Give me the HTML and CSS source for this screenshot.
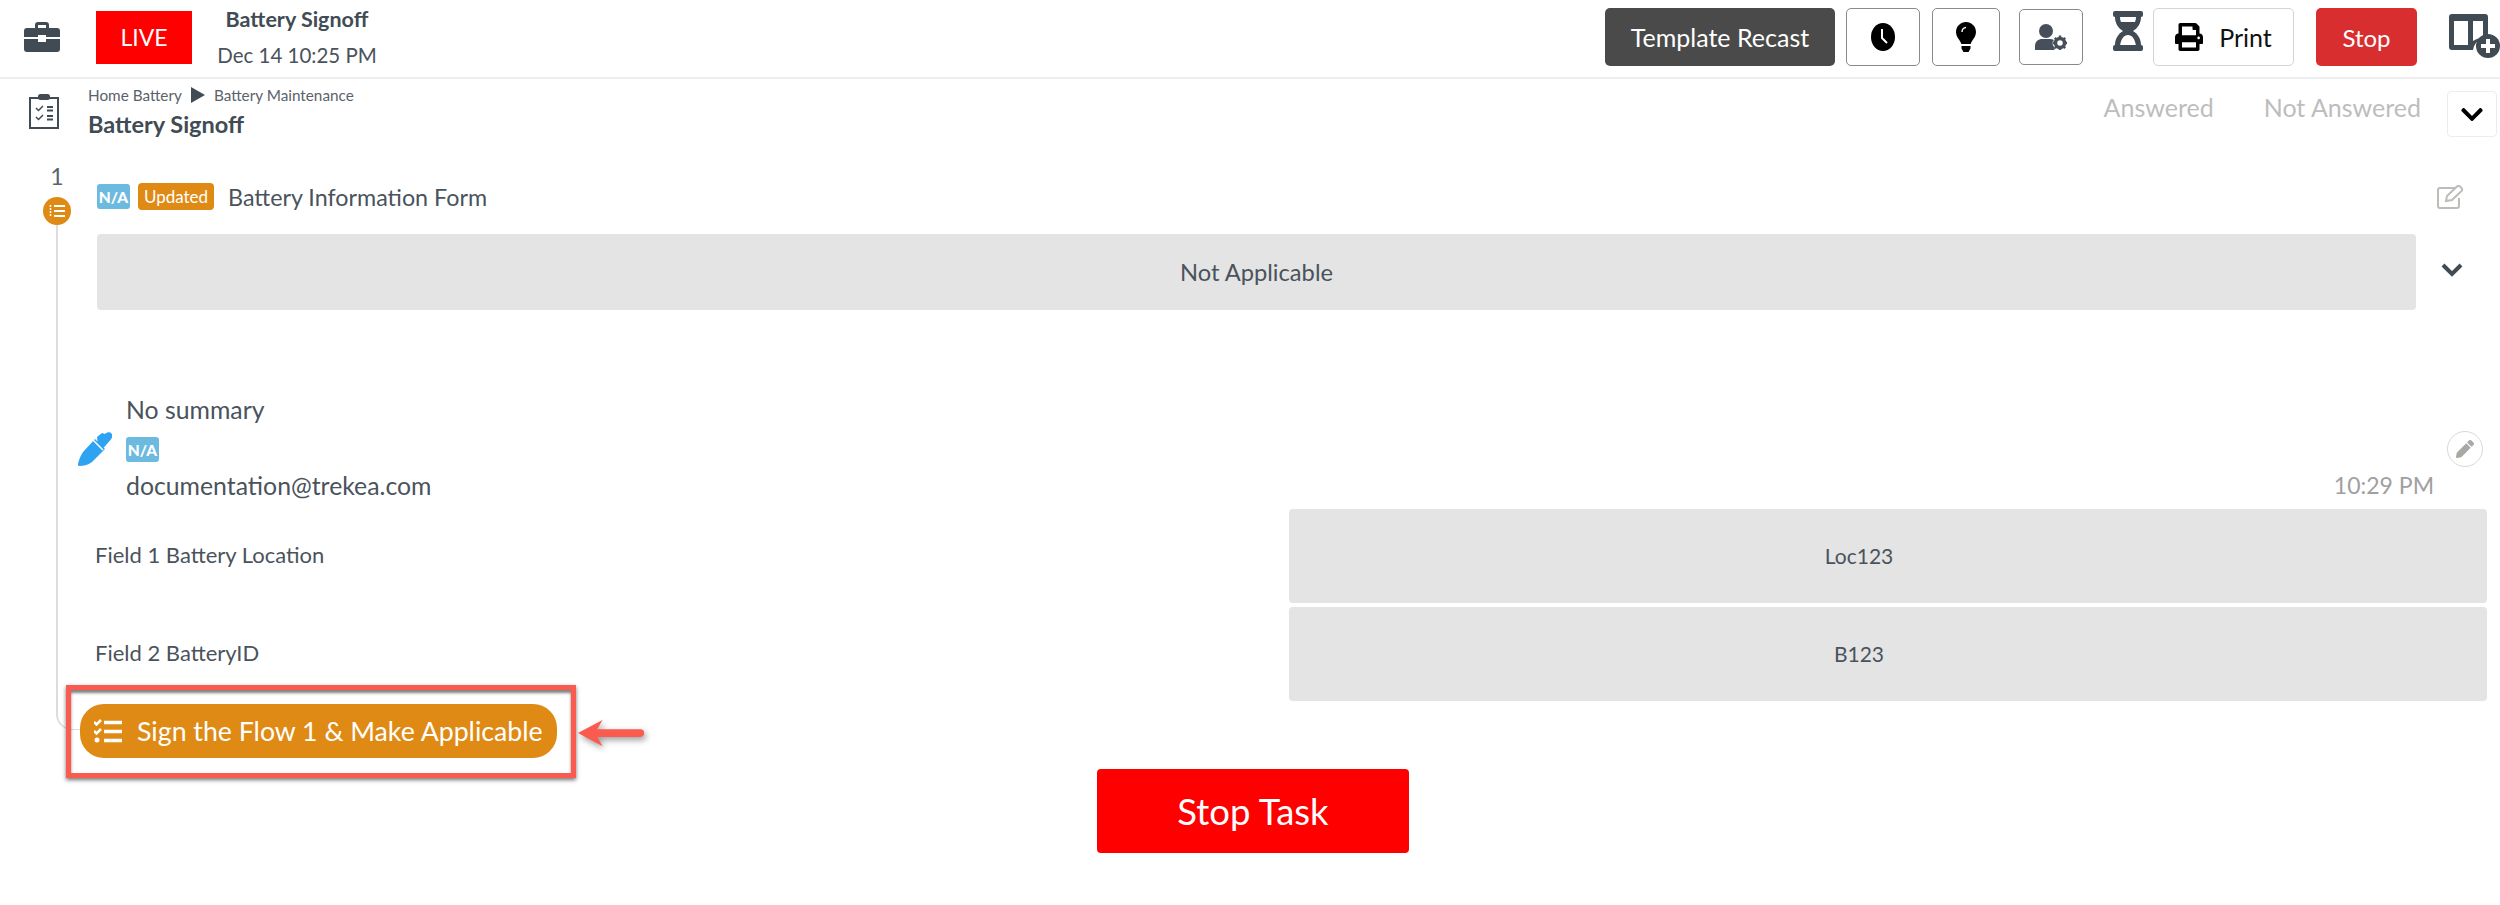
FILE: index.html
```html
<!DOCTYPE html>
<html lang="en">
<head>
<meta charset="utf-8">
<title>Battery Signoff</title>
<link rel="stylesheet" href="styles.css">
</head>
<body>
<header class="topbar">
  <svg class="ic-brief" viewBox="0 0 36 30"><path fill="#414b54" fill-rule="evenodd" d="M11 6V3a3 3 0 0 1 3-3h8a3 3 0 0 1 3 3v3h8a3 3 0 0 1 3 3v6H22v-2h-8v2H0V9a3 3 0 0 1 3-3zm3 0h8V3h-8zM0 17h14v3h8v-3h14v10a3 3 0 0 1-3 3H3a3 3 0 0 1-3-3z"/></svg>
  <div class="live">LIVE</div>
  <div class="task-meta">
    <div class="task-name">Battery Signoff</div>
    <div class="task-date">Dec 14 10:25 PM</div>
  </div>
  <div class="actions">
    <button class="btn btn-dark">Template Recast</button>
    <button class="btn btn-icon btn-clock"><svg class="ic-20" viewBox="0 0 24 28"><ellipse cx="12" cy="14" rx="12" ry="14" fill="#000"/><path d="M11 6v9l5 5" fill="none" stroke="#fff" stroke-width="2"/></svg></button>
    <button class="btn btn-icon btn-bulb"><svg class="ic-bulb" viewBox="0 0 20 30"><path fill="#000" d="M10 0C4.500 0 0 4.400 0 10c0 3.400 1.700 5.700 3.300 8 .8 1.200 1.700 2.500 2 4h9.400c.3-1.500 1.200-2.800 2-4 1.600-2.300 3.300-4.600 3.300-8C20 4.400 15.500 0 10 0zM5.500 24h9v2.500L12.500 30h-5l-2-3.500z"/><path d="M6 10c0-2.500 1.800-4.500 4-4.500" fill="none" stroke="#fff" stroke-width="1.400"/></svg></button>
    <button class="btn btn-icon btn-user"><svg class="ic-user" viewBox="0 0 32 26"><circle cx="11" cy="7" r="7" fill="#47505a"/><path fill="#47505a" d="M0 26v-4c0-4.500 3.500-7 7-7h8c1.500 0 2.800.4 3.900 1.100L17 19l3 6-1 1z"/><circle cx="25" cy="19" r="4.500" fill="none" stroke="#47505a" stroke-width="3.500"/><path stroke="#47505a" stroke-width="2.500" d="M25 11.500v3M25 23.500v3M17.500 19h3M29.500 19h3M19.800 13.800l2 2M28.200 22.200l2 2M19.800 24.200l2-2M28.200 15.800l2-2"/></svg></button>
    <svg class="ic-hour" viewBox="0 0 30 40"><path fill="#414b54" fill-rule="evenodd" d="M2 0h26a2 2 0 0 1 2 2v2a2 2 0 0 1-2 2c0 6-3 11-8 14 5 3 8 8 8 14a2 2 0 0 1 2 2v2a2 2 0 0 1-2 2H2a2 2 0 0 1-2-2v-2a2 2 0 0 1 2-2c0-6 3-11 8-14C5 17 2 12 2 6a2 2 0 0 1-2-2V2a2 2 0 0 1 2-2zm5 6c0 2 .4 3.500 1 5h14c.6-1.500 1-3 1-5zm8 18c-4 0-7 4-7.800 10h15.600c-.8-6-3.800-10-7.800-10z"/></svg>
    <button class="btn btn-print"><svg class="ic-print" viewBox="0 0 512 512"><path fill="#000" d="M448 192V77.250c0-8.490-3.370-16.620-9.370-22.630L393.370 9.370c-6-6-14.140-9.370-22.630-9.370H96C78.330 0 64 14.330 64 32v160c-35.350 0-64 28.650-64 64v112c0 8.840 7.160 16 16 16h48v96c0 17.670 14.330 32 32 32h320c17.670 0 32-14.330 32-32v-96h48c8.840 0 16-7.160 16-16V256c0-35.350-28.650-64-64-64zm-64 256H128v-96h256v96zm0-224H128V64h192v48c0 8.840 7.160 16 16 16h48v96zm48 72c-13.250 0-24-10.750-24-24 0-13.260 10.750-24 24-24s24 10.740 24 24c0 13.250-10.750 24-24 24z"/></svg>Print</button>
    <button class="btn btn-stop">Stop</button>
    <svg class="ic-cols" viewBox="0 0 51 44"><path fill="#414b54" fill-rule="evenodd" d="M3 0h33a3 3 0 0 1 3 3v21a14 14 0 0 0-15 12H3a3 3 0 0 1-3-3V3a3 3 0 0 1 3-3zm2 7v24h14V7zm19 0v20c3-2 6-3 10-3.500V7z"/><circle cx="39" cy="32" r="12" fill="#414b54"/><path stroke="#fff" stroke-width="4" d="M39 25v14M32 32h14"/></svg>
  </div>
</header>

<section class="subbar">
  <svg class="ic-clip" viewBox="0 0 30 35"><rect x="1" y="4" width="28" height="30" fill="none" stroke="#414b54" stroke-width="2"/><rect x="9" y="0" width="12" height="6" rx="2.500" fill="#414b54"/><path fill="none" stroke="#414b54" stroke-width="1.500" d="M7 14l2.500 2.500L14 12M7 23l2.500 2.500L14 21"/><path stroke="#414b54" stroke-width="1.800" d="M18 13h6M18 16.500h6M18 22h6M18 25.500h6"/></svg>
  <div class="crumbs">
    <div class="crumb-line">Home Battery<svg class="ic-tri" viewBox="0 0 14 16"><path fill="#414b54" d="M0 0l14 8-14 8z"/></svg>Battery Maintenance</div>
    <div class="sub-title">Battery Signoff</div>
  </div>
  <div class="filters">
    <span class="filter filter-a">Answered</span>
    <span class="filter filter-b">Not Answered</span>
    <div class="filter-drop"><svg class="ic-chev-b" viewBox="0 0 448 512"><path fill="#000" d="M207.029 381.476L12.686 187.132c-9.373-9.373-9.373-24.569 0-33.941l22.667-22.667c9.357-9.357 24.522-9.375 33.901-.04L224 284.505l154.745-154.021c9.379-9.335 24.544-9.317 33.901.04l22.667 22.667c9.373 9.373 9.373 24.569 0 33.941L240.971 381.476c-9.373 9.372-24.569 9.372-33.942 0z"/></svg></div>
  </div>
</section>

<main class="flow">
  <aside class="rail">
    <div class="rail-num">1</div>
    <div class="rail-dot"><svg class="ic-list" viewBox="0 0 16 14"><path stroke="#fff" stroke-width="2" d="M5 2h11M5 7h11M5 12h11"/><path stroke="#fff" stroke-width="1.500" stroke-dasharray="2 1" d="M1.500 1v12"/></svg></div>
    <div class="rail-line"></div>
  </aside>
  <div class="content">
    <div class="form-head">
      <span class="tag-na">N/A</span>
      <span class="tag-upd">Updated</span>
      <span class="form-name">Battery Information Form</span>
      <svg class="ic-edit" viewBox="0 0 28 24"><path fill="none" stroke="#bdbcb8" stroke-width="2" d="M18 3H3a2 2 0 0 0-2 2v16a2 2 0 0 0 2 2h17a2 2 0 0 0 2-2v-8"/><path fill="none" stroke="#bdbcb8" stroke-width="2" d="M9 16l1-5L20 1.500a2 2 0 0 1 3 0l1.500 1.500a2 2 0 0 1 0 3L15 15z"/></svg>
    </div>
    <div class="na-row">
      <div class="na-box">Not Applicable</div>
      <div class="na-side"><svg class="ic-chev" viewBox="0 0 22 15"><path fill="none" stroke="#414b54" stroke-width="4" d="M2 3l9 9 9-9"/></svg></div>
    </div>
    <div class="summary">
      <svg class="ic-pen" viewBox="0 0 34 34"><path fill="#2ea3f2" d="M19 5l5-4 3 1c2-2 5-2.500 6.500-.5 1.500 2 .8 4.500-1 6.500L21 21zM17 7l10 10-13 13c-4 3-9 4-13 4-1 0-1-1-1-2 1-5 3-9 5-12z"/><path stroke="#fff" stroke-width="1.500" d="M15 8l10 10" fill="none"/></svg>
      <div class="summary-text">
        <div class="sum-line">No summary</div>
        <div class="sum-tag"><span class="tag-na">N/A</span></div>
        <div class="sum-line">documentation@trekea.com</div>
      </div>
      <div class="summary-side">
        <div class="edit-circle"><svg class="ic-pencil" viewBox="0 0 512 512"><path fill="#a9a8a4" d="M497.900 142.100l-46.100 46.100c-4.700 4.700-12.300 4.700-17 0l-111-111c-4.700-4.700-4.700-12.300 0-17l46.100-46.100c18.700-18.700 49.100-18.700 67.900 0l60.100 60.100c18.800 18.700 18.800 49.100 0 67.900zM284.200 99.800L21.600 362.400.4 483.900c-2.900 16.400 11.400 30.600 27.800 27.800l121.500-21.300 262.600-262.600c4.700-4.700 4.700-12.300 0-17l-111-111c-4.800-4.700-12.400-4.700-17.100 0z"/></svg></div>
        <div class="sum-time">10:29 PM</div>
      </div>
    </div>
    <div class="fields">
      <div class="field-label">Field 1 Battery Location</div>
      <div class="field-value">Loc123</div>
      <div class="field-label">Field 2 BatteryID</div>
      <div class="field-value">B123</div>
    </div>
    <div class="sign-row">
      <button class="sign-btn"><svg class="ic-task" viewBox="0 0 28 24"><path fill="none" stroke="#fff" stroke-width="2.500" d="M0 3l2.500 2.500L7 1M0 12l2.500 2.500L7 10"/><circle cx="3" cy="21" r="2.500" fill="#fff"/><path stroke="#fff" stroke-width="3.500" d="M10 3.500h18M10 12.500h18M10 21.500h18"/></svg>Sign the Flow 1 &amp; Make Applicable</button>
      <div class="callout"></div>
      <svg class="callout-arrow" viewBox="0 0 72 40"><g fill="#fb5a4f"><path d="M0 18L26 4l-8 14 8 14z"/><path d="M14 14h52a4 4 0 0 1 0 8H14z"/></g></svg>
    </div>
  </div>
</main>
<div class="stop-wrap"><button class="stop-task">Stop Task</button></div>
</body>
</html>
```

FILE: styles.css
```css
* { box-sizing: border-box; }
html, body { margin: 0; padding: 0; background: #fff; overflow: hidden; }
body { font-family: Lato, "Open Sans", sans-serif; color: #4a535c; width: 2500px; height: 905px; }
button { font-family: inherit; cursor: pointer; }
svg { display: block; flex: none; }

.topbar { display: flex; align-items: center; height: 79px; padding: 0 0 3px 24px; border-bottom: 2px solid #eee; }
.ic-brief { width: 36px; height: 30px; margin-right: 36px; }
.live { width: 96px; height: 53px; background: #f00; color: #fff; font-size: 23px; display: flex; align-items: center; justify-content: center; }
.task-meta { width: 184px; margin: 0 0 0 13px; text-align: center; display: flex; flex-direction: column; gap: 12px; }
.task-name { font-size: 21.500px; font-weight: 700; line-height: 24px; color: #414b54; }
.task-date { font-size: 20.500px; line-height: 24px; color: #4a535c; }
.actions { margin-left: auto; display: flex; align-items: center; padding-right: 32px; }
.btn { height: 58px; border-radius: 5px; background: #fff; display: flex; align-items: center; justify-content: center; padding: 0; border: 1px solid #8a8a8a; }
.btn-dark { width: 230px; background: #4a4a4a; color: #fff; border: 0; font-size: 25px; margin-right: 11px; }
.btn-clock { width: 74px; margin-right: 12px; }
.btn-bulb { width: 68px; margin-right: 19px; }
.btn-user { width: 64px; height: 56px; margin-right: 30px; }
.ic-20 { width: 24px; height: 28px; }
.ic-bulb { width: 20px; height: 30px; }
.ic-user { width: 32px; height: 26px; }
.ic-hour { width: 30px; height: 40px; margin: -12px 10px 0 0; }
.btn-print { width: 141px; border-color: #d4d4d4; color: #111; font-size: 25px; gap: 16px; margin-right: 22px; }
.ic-print { width: 28px; height: 28px; }
.btn-stop { width: 101px; background: #d92e30; border: 0; color: #fff; font-size: 24px; margin-right: 32px; }
.ic-cols { width: 51px; height: 44px; margin: -2px -32px 0 0; }

.subbar { display: flex; height: 63px; align-items: flex-start; padding: 0 3px 0 29px; }
.ic-clip { width: 30px; height: 35px; margin: 15px 29px 0 0; }
.crumbs { padding-top: 6px; }
.crumb-line { display: flex; align-items: center; font-size: 15.300px; line-height: 20px; gap: 9px; color: #5a626a; }
.ic-tri { width: 14px; height: 16px; }
.sub-title { margin-top: 5px; font-size: 23.500px; font-weight: 700; line-height: 28px; color: #414b54; }
.filters { margin-left: auto; display: flex; align-items: flex-start; }
.filter { font-size: 25px; color: #bdbdbd; line-height: 30px; margin-top: 13px; }
.filter-b { margin-left: 50px; }
.filter-drop { width: 50px; height: 46px; margin: 12px 0 0 26px; border: 1px solid #ececec; border-radius: 4px; display: flex; align-items: center; justify-content: center; }
.ic-chev-b { width: 22px; height: 25px; }

.flow { display: grid; grid-template-columns: 80px 1fr; padding-top: 22px; }
.rail { display: flex; flex-direction: column; margin-bottom: 28px; }
.rail-num { width: 114px; font-size: 23px; line-height: 24px; text-align: center; margin-bottom: 9px; color: #5a626a; }
.rail-dot { width: 28px; height: 28px; margin-left: 43px; border-radius: 50%; background: #df8a14; display: flex; align-items: center; justify-content: center; }
.ic-list { width: 16px; height: 14px; }
.rail-line { flex: 1; margin-left: 56px; border-left: 2px solid #dcdcdc; border-bottom: 1px solid #dcdcdc; border-bottom-left-radius: 16px; }

.content { padding-top: 19px; min-width: 0; }
.form-head { display: flex; align-items: center; height: 27px; padding-left: 17px; }
.tag-na { display: inline-flex; align-items: center; justify-content: center; width: 33px; height: 25px; background: #6cbadf; color: #fff; border-radius: 3px; font-size: 15.500px; font-weight: 900; }
.tag-upd { display: inline-flex; align-items: center; justify-content: center; width: 76px; height: 27px; margin-left: 8px; background: #df8a14; color: #fff; border-radius: 4px; font-size: 17px; }
.form-name { margin-left: 14px; font-size: 23.300px; }
.ic-edit { width: 28px; height: 24px; margin: 0 35px 0 auto; }
.na-row { display: flex; margin: 24px 0 0 17px; }
.na-box { flex: 1; height: 76px; background: #e4e4e4; border-radius: 4px; display: flex; align-items: center; justify-content: center; font-size: 23.700px; }
.na-side { width: 84px; padding: 28px 0 0 25px; }
.ic-chev { width: 22px; height: 15px; }

.summary { display: flex; margin-top: 82px; margin-left: -2px; align-items: stretch; }
.ic-pen { width: 34px; height: 34px; margin: 40px 14px 0 0; }
.summary-text { flex: 1; }
.sum-line { font-size: 24.800px; line-height: 36px; height: 36px; }
.sum-tag { height: 40px; padding-top: 9px; }
.sum-tag .tag-na { vertical-align: top; }
.summary-side { display: flex; flex-direction: column; align-items: flex-end; padding: 39px 17px 0 0; }
.edit-circle { width: 36px; height: 36px; border: 1px solid #d8d8d8; border-radius: 50%; display: flex; align-items: center; justify-content: center; }
.ic-pencil { width: 18px; height: 18px; }
.sum-time { margin: 5px 49px 0 0; font-size: 23px; line-height: 26px; color: #a0a0a0; }

.fields { display: grid; grid-template-columns: 1209px 1fr; grid-auto-rows: 94px; row-gap: 4px; margin: 5px 13px 0 0; }
.field-label { display: flex; align-items: center; padding: 0 0 3px 15px; font-size: 22px; }
.field-value { background: #e4e4e4; border-radius: 4px; display: flex; align-items: center; justify-content: center; padding: 0 58px 2px 0; font-size: 21px; }

.sign-row { position: relative; margin-top: 3px; height: 54px; }
.sign-btn { width: 477px; height: 54px; border: 0; border-radius: 24px; background: #df8a14; color: #fff; font-size: 26.700px; display: flex; align-items: center; padding: 0 0 0 14px; gap: 15px; white-space: nowrap; }
.ic-task { width: 28px; height: 24px; }
.callout { position: absolute; left: -14px; top: -19px; width: 510px; height: 93px; border: 5px solid #fb5a4f; box-shadow: 0 2px 4px rgba(0,0,0,.55), inset 0 3px 3px rgba(0,0,0,.5); }
.callout-arrow { position: absolute; left: 498px; top: 11px; width: 68px; height: 40px; filter: drop-shadow(2px 3px 3px rgba(0,0,0,.4)); }

.stop-wrap { margin: 11px 0 0 1097px; }
.stop-task { width: 312px; height: 84px; background: #f00; color: #fff; border: 0; border-radius: 4px; font-size: 36.500px; }
```
